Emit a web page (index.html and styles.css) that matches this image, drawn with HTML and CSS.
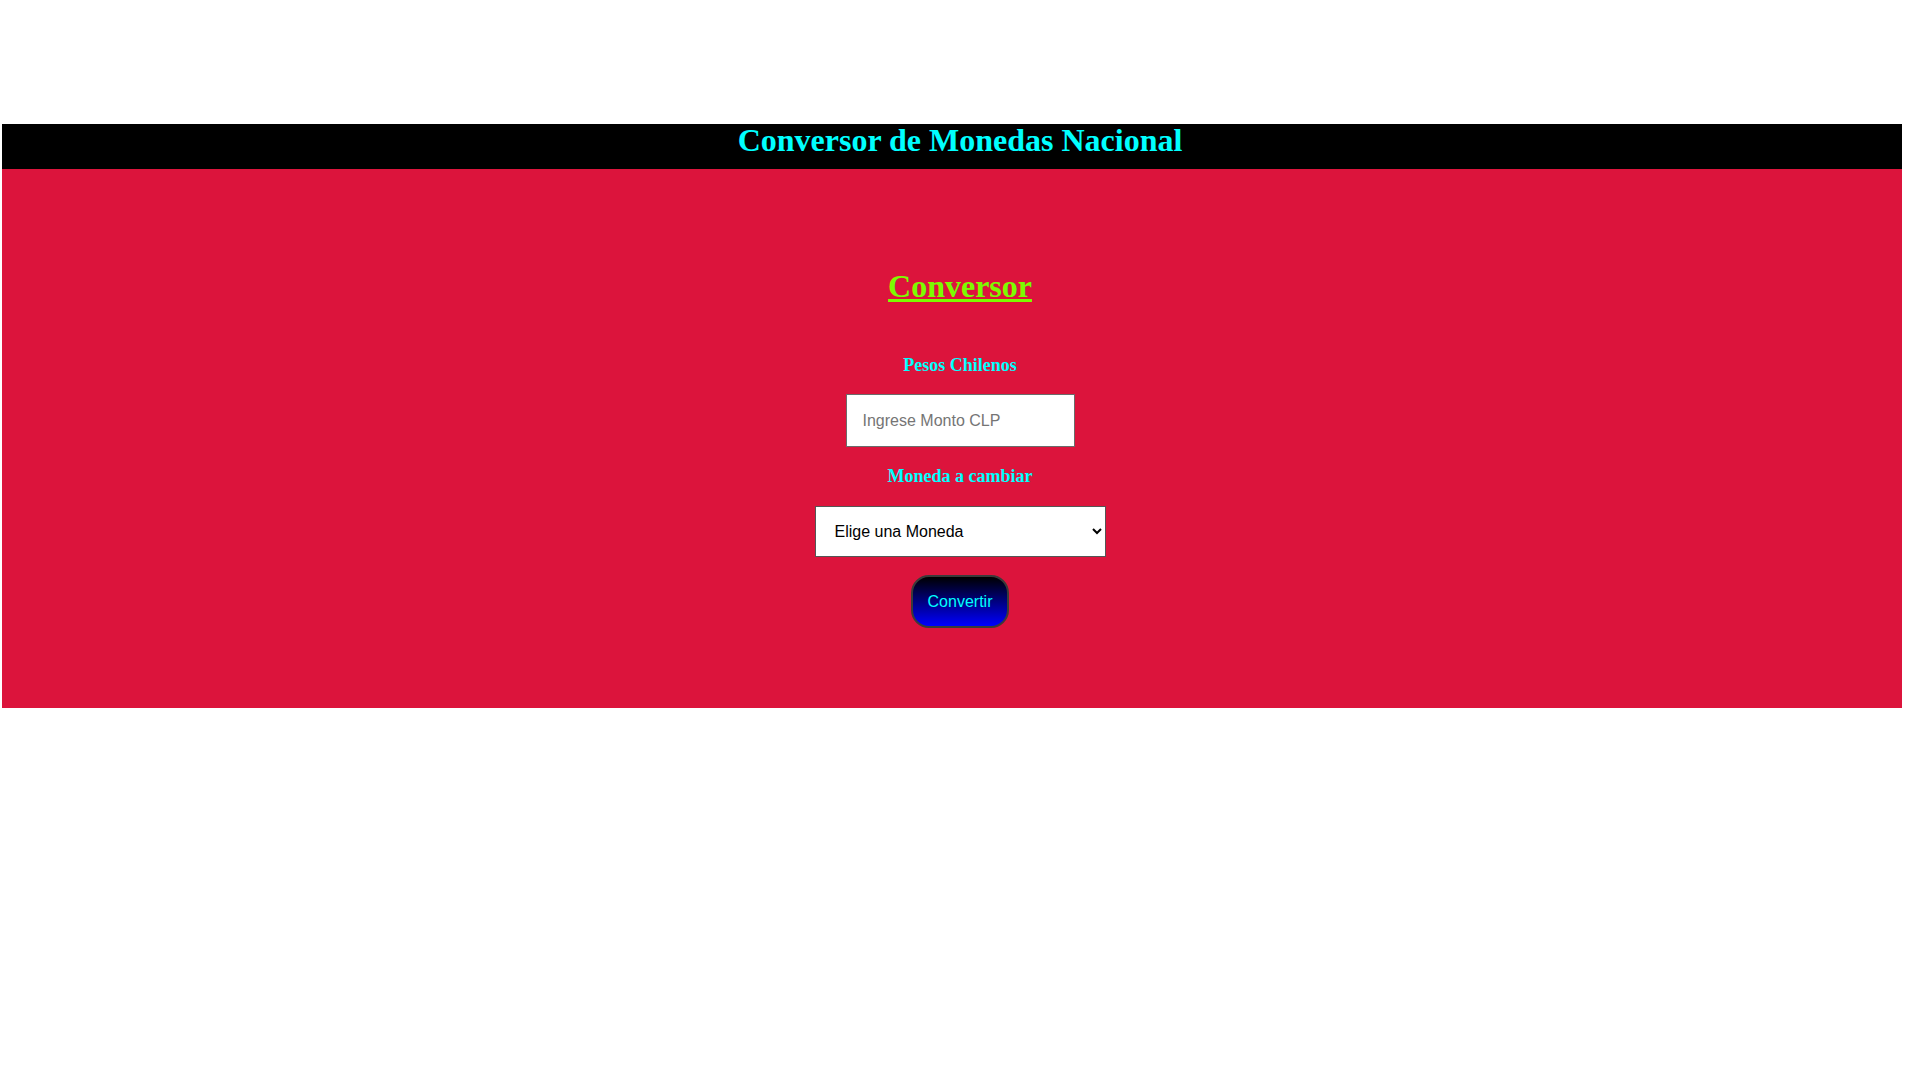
FILE: index.html
```html
<!DOCTYPE html>
<html lang="es">
<head>
<meta charset="utf-8">
<title>Conversor de Monedas</title>
<link rel="stylesheet" href="styles.css">
</head>
<body>
<div class="top-space"></div>
<header class="header">
  <h1 class="title">Conversor de Monedas Nacional</h1>
</header>
<main class="panel">
  <div class="inner">
    <h2 class="subtitle">Conversor</h2>
    <label class="label label-first" for="monto">Pesos Chilenos</label>
    <input class="amount" id="monto" type="text" placeholder="Ingrese Monto CLP">
    <label class="label" for="moneda">Moneda a cambiar</label>
    <select class="currency" id="moneda">
      <option>Elige una Moneda</option>
      <option>Dólar</option>
      <option>Euro</option>
      <option>UF</option>
    </select>
    <button class="convert" type="button">Convertir</button>
  </div>
</main>
</body>
</html>
```
FILE: styles.css
```css
html, body {
  margin: 0;
  padding: 0;
  background: #ffffff;
}
body {
  font-family: "Liberation Serif", "Times New Roman", serif;
}
.top-space {
  height: 124px;
}
.header {
  margin-left: 2px;
  width: 1900px;
  height: 45px;
  background: #000000;
  padding-left: 16px;
  box-sizing: border-box;
}
.title {
  margin: 0;
  font-size: 32px;
  line-height: 32px;
  font-weight: bold;
  color: #00ffff;
  text-align: center;
}
.panel {
  margin-left: 2px;
  width: 1900px;
  height: 539px;
  background: #dc143c;
  box-sizing: border-box;
  padding-top: 99px;
  padding-left: 16px;
}
.inner {
  display: flex;
  flex-direction: column;
  align-items: center;
}
.subtitle {
  margin: 0;
  font-size: 32px;
  line-height: 37px;
  font-weight: bold;
  color: #7cfc00;
  text-decoration: underline;
}
.label {
  display: block;
  font-size: 18px;
  line-height: 20px;
  font-weight: bold;
  color: #00ffff;
  margin-top: 19px;
  margin-bottom: 20px;
}
.label-first {
  margin-top: 50px;
  margin-bottom: 19px;
}
.amount {
  width: 229px;
  height: 53px;
  box-sizing: border-box;
  border: 1px solid #6b6b6b;
  padding: 0 16px;
  font-family: "Liberation Sans", Arial, sans-serif;
  font-size: 16px;
  color: #000;
  background: #fff;
  margin: 0;
  outline: none;
}
.amount::placeholder {
  color: #757575;
}
.currency {
  width: 291px;
  height: 51px;
  box-sizing: border-box;
  border: 1px solid #555;
  padding: 0 0 0 15px;
  font-family: "Liberation Sans", Arial, sans-serif;
  font-size: 16px;
  color: #000;
  background: #fff;
  margin: 0;
  border-radius: 0;
}
.convert {
  margin-top: 18px;
  width: 94px;
  height: 49px;
  box-sizing: content-box;
  border: 2px solid #3a3a3a;
  border-radius: 18px;
  background: linear-gradient(to bottom, #000000, #0000ff);
  color: #00ffff;
  font-family: "Liberation Sans", Arial, sans-serif;
  font-size: 16px;
  padding: 0;
  cursor: pointer;
}
```
